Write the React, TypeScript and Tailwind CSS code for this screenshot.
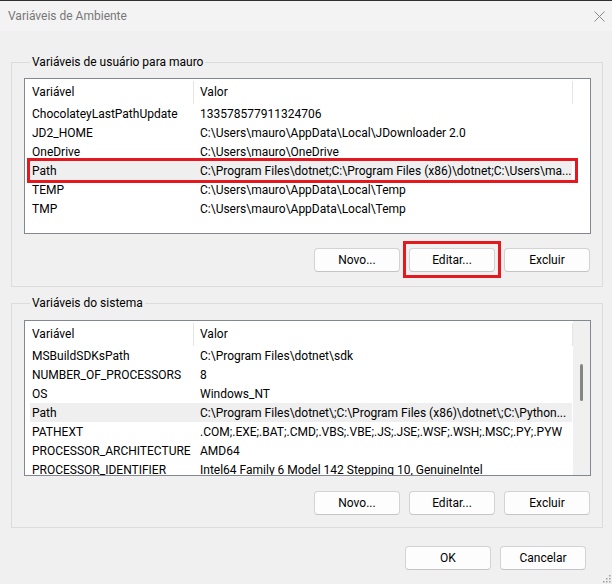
import React from "react";

const userVars: [string, string][] = [
  ["ChocolateyLastPathUpdate", "133578577911324706"],
  ["JD2_HOME", "C:\\Users\\mauro\\AppData\\Local\\JDownloader 2.0"],
  ["OneDrive", "C:\\Users\\mauro\\OneDrive"],
  ["Path", "C:\\Program Files\\dotnet;C:\\Program Files (x86)\\dotnet;C:\\Users\\ma..."],
  ["TEMP", "C:\\Users\\mauro\\AppData\\Local\\Temp"],
  ["TMP", "C:\\Users\\mauro\\AppData\\Local\\Temp"],
];

const sysVars: [string, string][] = [
  ["MSBuildSDKsPath", "C:\\Program Files\\dotnet\\sdk"],
  ["NUMBER_OF_PROCESSORS", "8"],
  ["OS", "Windows_NT"],
  ["Path", "C:\\Program Files\\dotnet\\;C:\\Program Files (x86)\\dotnet\\;C:\\Python..."],
  ["PATHEXT", ".COM;.EXE;.BAT;.CMD;.VBS;.VBE;.JS;.JSE;.WSF;.WSH;.MSC;.PY;.PYW"],
  ["PROCESSOR_ARCHITECTURE", "AMD64"],
  ["PROCESSOR_IDENTIFIER", "Intel64 Family 6 Model 142 Stepping 10, GenuineIntel"],
];

function Button({ label, marked }: { label: string; marked?: boolean }) {
  return (
    <div className="relative">
      <button className="w-[86px] h-[24px] bg-[#fdfdfd] border border-[#d3d3d3] border-b-[#c4c4c4] rounded-[4px] text-[12px] text-black leading-none">
        {label}
      </button>
      {marked && (
        <span className="absolute -left-[6px] -right-[6px] -top-[7px] -bottom-[6px] border-[3px] border-[#e3191f] pointer-events-none" />
      )}
    </div>
  );
}

function List({
  rows,
  highlight,
  marked,
  scrollbar,
}: {
  rows: [string, string][];
  highlight: number;
  marked?: boolean;
  scrollbar?: boolean;
}) {
  return (
    <div className="h-[156px] border border-[#828790] bg-white flex overflow-hidden">
      <div className="flex-1 flex flex-col min-w-0">
        <div className="h-[25px] shrink-0 flex items-center">
          <div className="w-[168px] pl-[7px]">Variável</div>
          <div className="w-px h-[23px] mt-[1px] bg-[#e5e5e5]" />
          <div className="w-[378px] pl-[6px]">Valor</div>
          <div className="w-px h-[23px] mt-[1px] bg-[#e5e5e5]" />
        </div>
        <div className="flex flex-col">
          {rows.map(([k, v], i) => (
            <div
              key={k}
              className={
                "relative ml-[5px] w-[542px] h-[19px] shrink-0 flex items-center " +
                (i === highlight ? "bg-[#efefef]" : "")
              }
            >
              <div className="w-[163px] pl-[2px] whitespace-nowrap overflow-hidden">{k}</div>
              <div className="w-[379px] pl-[7px] whitespace-nowrap overflow-hidden text-ellipsis">{v}</div>
              {marked && i === highlight && (
                <span className="absolute -left-[3px] -right-[6px] -top-[3px] -bottom-[3px] border-[3px] border-[#e3191f] pointer-events-none" />
              )}
            </div>
          ))}
        </div>
      </div>
      {scrollbar ? (
        <div className="w-[17px] shrink-0 bg-[#f0f0f0] flex flex-col items-center">
          <div className="mt-[43px] w-[3px] h-[37px] rounded-full bg-[#858585]" />
        </div>
      ) : (
        <div className="w-[17px] shrink-0" />
      )}
    </div>
  );
}

export default function App() {
  return (
    <div
      className="relative w-[612px] h-[584px] bg-[#f0f0f0] overflow-hidden text-[12px] text-black"
      style={{ fontFamily: '"Segoe UI", Roboto, "Liberation Sans", Arial, sans-serif' }}
    >
      <div className="h-[31px] bg-[#f3f3f3] border-t border-[#2e2e2e] flex items-center justify-between pl-[8px] pr-[7px]">
        <span className="text-[#777777] text-[12px]">Variáveis de Ambiente</span>
        <svg width="11" height="11" viewBox="0 0 11 11" className="mt-[1px]">
          <path d="M0.5 0.5 L10.5 10.5 M10.5 0.5 L0.5 10.5" stroke="#8a8a8a" strokeWidth="1" fill="none" />
        </svg>
      </div>

      <fieldset className="mt-[23px] ml-[11px] mr-[9px] border border-[#dcdcdc] pl-[12px] pr-[11px] pb-[14px]">
        <legend className="ml-[6px] px-[2px] leading-[16px] text-black">Variáveis de usuário para mauro</legend>
        <div className="mt-[8px]">
          <List rows={userVars} highlight={3} marked />
        </div>
        <div className="mt-[14px] flex justify-end gap-[9px] pr-[1px]">
          <Button label="Novo..." />
          <Button label="Editar..." marked />
          <Button label="Excluir" />
        </div>
      </fieldset>

      <fieldset className="mt-[8px] ml-[11px] mr-[9px] border border-[#dcdcdc] pl-[12px] pr-[11px] pb-[12px]">
        <legend className="ml-[6px] px-[2px] leading-[16px] text-black">Variáveis do sistema</legend>
        <div className="mt-[9px]">
          <List rows={sysVars} highlight={3} scrollbar />
        </div>
        <div className="mt-[15px] flex justify-end gap-[9px] pr-[1px]">
          <Button label="Novo..." />
          <Button label="Editar..." />
          <Button label="Excluir" />
        </div>
      </fieldset>

      <div className="mt-[18px] flex justify-end gap-[9px] pr-[26px]">
        <Button label="OK" />
        <Button label="Cancelar" />
      </div>

      <svg width="10" height="10" viewBox="0 0 10 10" className="absolute right-[1px] bottom-[1px]">
        {[
          [8, 2], [8, 5], [5, 5], [8, 8], [5, 8], [2, 8],
        ].map(([x, y]) => (
          <rect key={`${x}-${y}`} x={x} y={y} width="1.5" height="1.5" fill="#a0a0a0" />
        ))}
      </svg>
    </div>
  );
}
